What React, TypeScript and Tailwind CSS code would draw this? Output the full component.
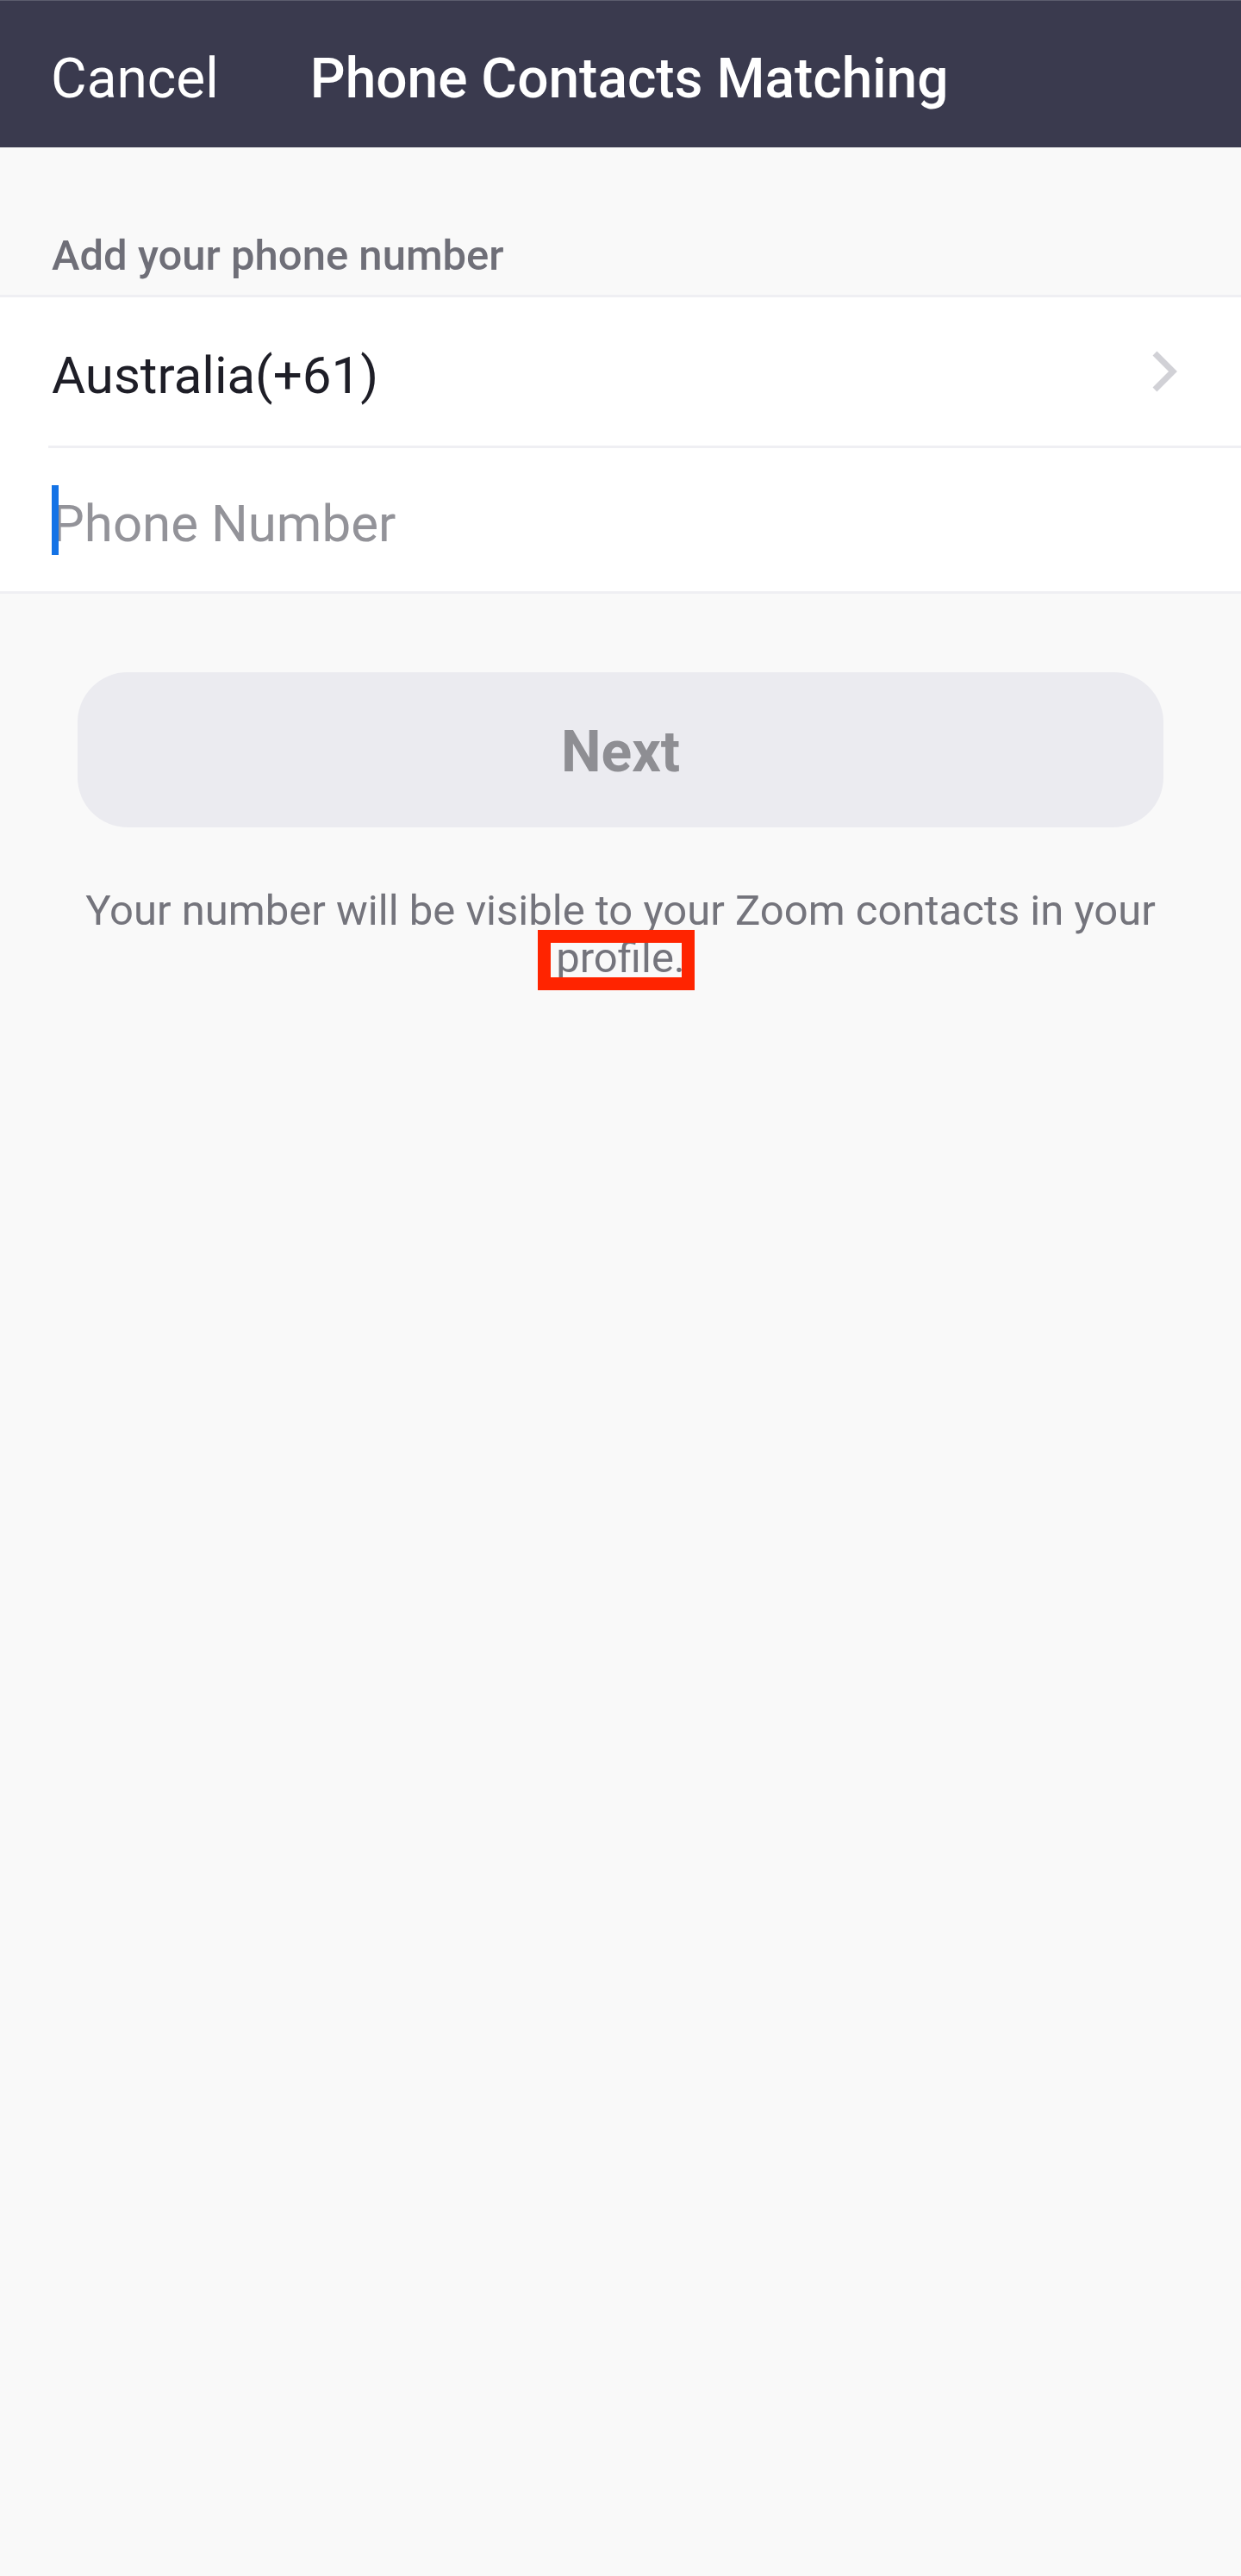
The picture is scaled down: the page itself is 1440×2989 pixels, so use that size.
import React from "react";

export default function App() {
  return (
    <div className="min-h-[2989px] w-full bg-[#f9f9f9] font-['Roboto','Noto_Sans',sans-serif]">
      {/* Header */}
      <header className="flex h-[171px] items-start border-t border-[#5c5d6d] bg-[#3a3a4e] pl-[59px] pt-[59px] text-white">
        <span className="text-[64px] leading-[64px]">Cancel</span>
        <span className="ml-[106px] text-[64px] font-medium leading-[64px]">Phone Contacts Matching</span>
      </header>

      {/* Section label */}
      <div className="pl-[60px] pt-[101px] pb-[21px] text-[49px] font-medium leading-[49px] text-[#6f6f78]">
        Add your phone number
      </div>

      {/* Form group */}
      <div className="border-y-[3px] border-[#efeff3] bg-white">
        <div className="flex h-[172px] items-center justify-between pl-[60px] pr-[74px]">
          <span className="mt-[9px] text-[60px] leading-[60px] text-[#1e1e27]">Australia(+61)</span>
          <svg width="30" height="50" viewBox="0 0 30 50" fill="none" aria-hidden="true">
            <polyline points="4,4 25,25 4,46" stroke="#d1d1d6" strokeWidth="7" strokeLinejoin="miter" />
          </svg>
        </div>
        <div className="ml-[56px] h-[3px] bg-[#efeff3]" />
        <div className="relative pl-[60px] pt-[57px] pb-[49px]">
          <input
            type="tel"
            placeholder="Phone Number"
            className="block h-[60px] w-full bg-transparent text-[60px] leading-[60px] text-[#1e1e27] outline-none placeholder:text-[#939399]"
          />
          <div className="pointer-events-none absolute left-[60px] top-[43px] h-[81px] w-[8px] bg-[#1473e6]" />
        </div>
      </div>

      {/* Next button */}
      <div className="mx-[90px] mt-[91px] flex items-center justify-center rounded-[58px] bg-[#ebebf0] pt-[60px] pb-[54px]">
        <span className="text-[66px] font-bold leading-[66px] text-[#8e8e93]">Next</span>
      </div>

      {/* Footer note */}
      <p className="mt-[69px] px-[90px] text-center text-[49px] leading-[55px] text-[#74747c]">
        Your number will be visible to your Zoom contacts in your{" "}
        <span className="relative inline-block leading-[55px]">
          profile.
          <span className="pointer-events-none absolute left-[calc(50%-96px)] top-[-5px] h-[70px] w-[182px] border-[15px] border-[#ff2400]" />
        </span>
      </p>
    </div>
  );
}
